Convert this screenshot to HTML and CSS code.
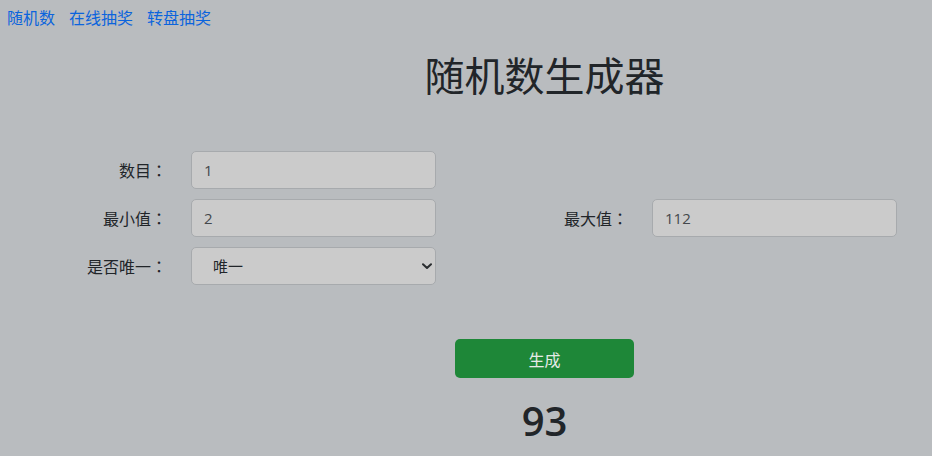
FILE: index.html
```html
<!DOCTYPE html>
<html lang="zh-CN">
<head>
<meta charset="utf-8">
<title>随机数生成器</title>
<link rel="stylesheet" href="styles.css">
</head>
<body>
<nav class="nav">
  <a href="#">随机数</a>
  <a href="#">在线抽奖</a>
  <a href="#">转盘抽奖</a>
</nav>
<main class="main">
  <h1 class="title">随机数生成器</h1>
</main>
<form class="form">
  <div class="field">
    <label class="label">数目<span class="colon" lang="ja">：</span></label>
    <input class="control" type="text" value="1">
  </div>
  <div class="empty"></div>
  <div class="field">
    <label class="label">最小值<span class="colon" lang="ja">：</span></label>
    <input class="control" type="text" value="2">
  </div>
  <div class="field">
    <label class="label">最大值<span class="colon" lang="ja">：</span></label>
    <input class="control" type="text" value="112">
  </div>
  <div class="field">
    <label class="label">是否唯一<span class="colon" lang="ja">：</span></label>
    <div class="select-wrap">
      <select class="control select">
        <option>唯一</option>
        <option>不唯一</option>
      </select>
      <svg class="chevron" width="10" height="7" viewBox="0 0 10 7"><path d="M1 1.2 L5 5 L9 1.2" fill="none" stroke="#2a2d30" stroke-width="2" stroke-linecap="round" stroke-linejoin="round"/></svg>
    </div>
  </div>
</form>
<section class="main actions">
  <button class="btn" type="button">生成</button>
  <div class="result">93</div>
</section>
</body>
</html>
```

FILE: styles.css
```css
html, body {
  margin: 0;
  padding: 0;
}
body {
  background: #b9bcbf;
  color: #212529;
  font-family: "Open Sans", "Noto Sans CJK SC", sans-serif;
  font-size: 16px;
  width: 932px;
  height: 456px;
  overflow: hidden;
}
.nav {
  display: flex;
  gap: 14px;
  padding: 6px 0 0 7px;
  line-height: 24px;
  height: 24px;
}
.nav a {
  color: #0b64dd;
  text-decoration: none;
}
.main {
  margin-left: 157px;
  width: 775px;
  display: flex;
  flex-direction: column;
  align-items: center;
}
.title {
  margin: 22px 0 0;
  font-size: 40px;
  line-height: 48px;
  font-weight: 400;
}
.form {
  margin-top: 51px;
  display: grid;
  grid-template-columns: 461px 461px;
  row-gap: 10px;
}
.field {
  display: grid;
  grid-template-columns: 167px 245px;
  column-gap: 24px;
  align-items: center;
}
.label {
  text-align: right;
  line-height: 24px;
  white-space: nowrap;
}
.colon {
  font-family: "Noto Sans CJK JP", sans-serif;
}
.control {
  box-sizing: border-box;
  width: 245px;
  height: 38px;
  margin: 0;
  border: 1px solid #a7aaad;
  border-radius: 5px;
  background: #cbcbcb;
  color: #44484c;
  font-family: "Open Sans", "Noto Sans CJK SC", sans-serif;
  font-size: 15px;
  padding: 0 12px;
  outline: none;
}
.select-wrap {
  position: relative;
  width: 245px;
  height: 38px;
}
.select {
  appearance: none;
  -webkit-appearance: none;
  padding-left: 21px;
  color: #212529;
}
.chevron {
  position: absolute;
  top: 16px;
  right: 4px;
}
.actions {
  margin-top: 54px;
}
.btn {
  width: 179px;
  height: 39px;
  border: none;
  border-radius: 5px;
  background: #1e8738;
  color: #e6ebe7;
  font-family: "Open Sans", "Noto Sans CJK SC", sans-serif;
  font-size: 16px;
  cursor: pointer;
}
.result {
  margin-top: 19px;
  font-size: 40px;
  line-height: 48px;
  font-weight: 600;
}
```
